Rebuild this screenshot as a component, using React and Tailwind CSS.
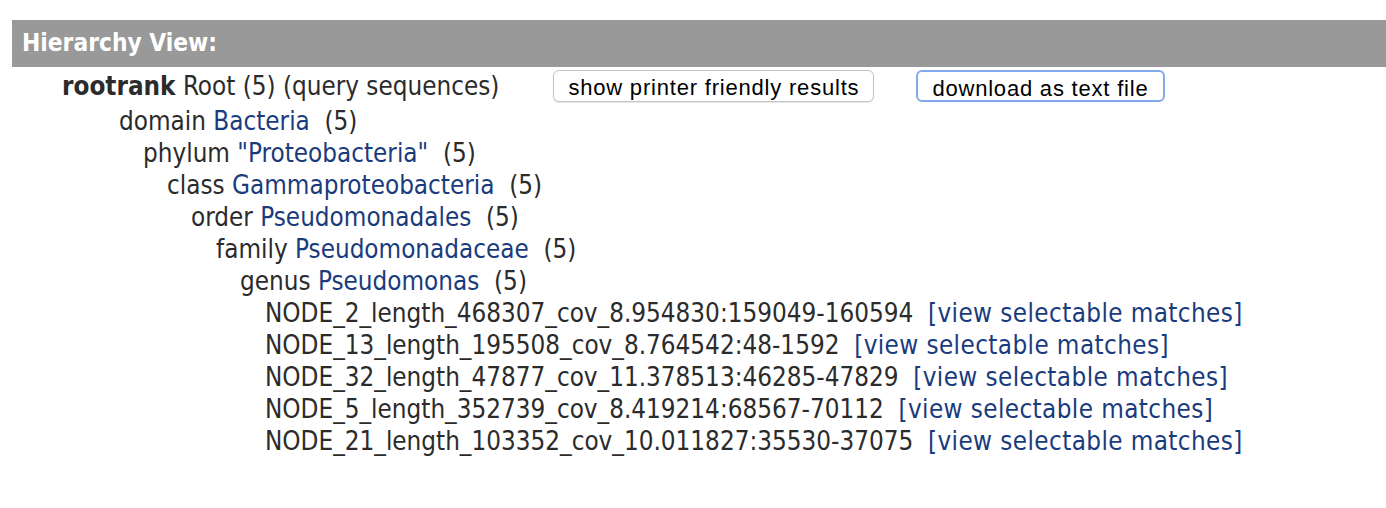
const nodes = [
  "NODE_2_length_468307_cov_8.954830:159049-160594",
  "NODE_13_length_195508_cov_8.764542:48-1592",
  "NODE_32_length_47877_cov_11.378513:46285-47829",
  "NODE_5_length_352739_cov_8.419214:68567-70112",
  "NODE_21_length_103352_cov_10.011827:35530-37075",
]

const ranks = [
  { rank: "domain", name: "Bacteria", pad: "pl-[119px]" },
  { rank: "phylum", name: '"Proteobacteria"', pad: "pl-[143px]" },
  { rank: "class", name: "Gammaproteobacteria", pad: "pl-[167px]" },
  { rank: "order", name: "Pseudomonadales", pad: "pl-[191px]" },
  { rank: "family", name: "Pseudomonadaceae", pad: "pl-[216px]" },
  { rank: "genus", name: "Pseudomonas", pad: "pl-[240px]" },
]

export default function App() {
  return (
    <div className="w-[1386px] h-[508px] bg-white text-[#2b2b2b] text-[25.8px] font-['DejaVu_Sans_Condensed','Noto_Sans',sans-serif] overflow-hidden">
      <div className="pt-[20px] pl-[12px]">
        <div className="h-[47px] bg-[#999] flex items-center pl-[10px] text-white font-bold text-[24.3px]">
          Hierarchy View:
        </div>
      </div>

      <div className="flex items-center h-[38px] pl-[62px] whitespace-pre">
        <span><b>rootrank</b> Root (5) (query sequences)</span>
        <button className="ml-[54px] h-[32px] px-[14px] bg-white border border-[#c4c4c4] rounded-md text-[22px] tracking-[0.8px] text-black font-['Liberation_Sans',sans-serif] shadow-[0_1px_1px_rgba(0,0,0,0.1)]">
          show printer friendly results
        </button>
        <button className="ml-[42px] h-[32px] px-[14px] bg-white border-2 border-[#80aaea] rounded-md text-[22px] tracking-[0.8px] text-black font-['Liberation_Sans',sans-serif]">
          download as text file
        </button>
      </div>

      {ranks.map((r) => (
        <div key={r.rank} className={`h-[32px] flex items-center whitespace-pre ${r.pad}`}>
          {r.rank} <a className="text-[#1a3b7c]">{r.name}</a>{"  (5)"}
        </div>
      ))}

      {nodes.map((n) => (
        <div key={n} className="h-[32px] flex items-center whitespace-pre pl-[265px]">
          {n}{"  "}<a className="text-[#1a3b7c] tracking-[0.4px]">[view selectable matches]</a>
        </div>
      ))}
    </div>
  )
}
